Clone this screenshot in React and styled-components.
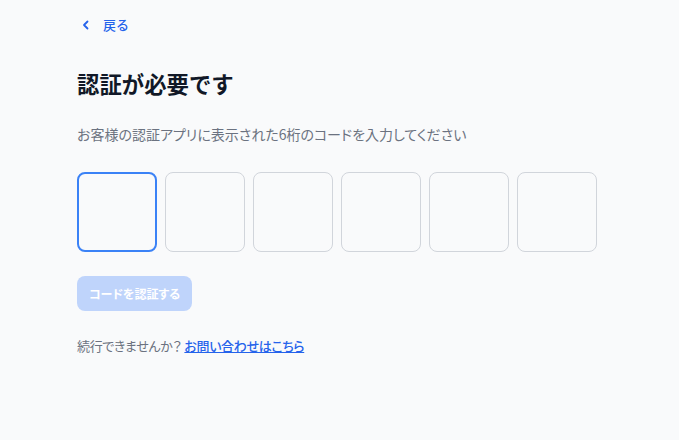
import React, { useState } from 'react';
import styled, { createGlobalStyle } from 'styled-components';

const GlobalStyle = createGlobalStyle`
  html, body {
    margin: 0;
    padding: 0;
    background: #f9fafb;
  }
  body {
    font-family: "Noto Sans CJK JP", "Noto Sans", sans-serif;
    color: #111827;
  }
`;

const Page = styled.div`
  min-height: 440px;
  padding: 11px 0 0 77px;
  box-sizing: border-box;
`;

const BackLink = styled.a`
  display: inline-flex;
  align-items: center;
  gap: 12px;
  margin-left: 4px;
  color: #2563eb;
  font-size: 13px;
  font-weight: 500;
  text-decoration: none;
  line-height: 22px;
  cursor: pointer;
`;

const Title = styled.h1`
  margin: 31px 0 0 0;
  font-size: 22.4px;
  font-weight: 700;
  line-height: 32px;
  color: #111827;
`;

const Subtitle = styled.p`
  margin: 25px 0 0 0;
  font-size: 14px;
  line-height: 20px;
  color: #6b7280;
  font-feature-settings: "palt";
`;

const CodeRow = styled.div`
  display: flex;
  gap: 8px;
  margin-top: 28px;
`;

const CodeBox = styled.input`
  width: 80px;
  height: 80px;
  box-sizing: border-box;
  border-radius: 8px;
  border: ${p => (p.$active ? '2px solid #3b82f6' : '1px solid #d1d5db')};
  background: #f9fafb;
  outline: none;
  text-align: center;
  font-size: 28px;
  font-family: inherit;
`;

const SubmitButton = styled.button`
  display: block;
  margin-top: 24px;
  height: 35px;
  padding: 0 12px;
  border: none;
  border-radius: 8px;
  background: #bfd4fb;
  color: #ffffff;
  font-family: inherit;
  font-size: 12px;
  font-weight: 700;
  font-feature-settings: "palt";
`;

const Help = styled.p`
  margin: 25px 0 0 0;
  font-size: 13px;
  line-height: 20px;
  color: #6b7280;
  font-feature-settings: "palt";
  letter-spacing: -0.35px;
`;

const HelpLink = styled.a`
  margin-left: 3px;
  color: #2563eb;
  font-weight: 500;
  text-decoration: underline;
  cursor: pointer;
`;

const Chevron = () => (
  <svg width="10" height="10" viewBox="0 0 10 10" fill="none">
    <path d="M6.5 1.5L3 5l3.5 3.5" stroke="#2563eb" strokeWidth="1.8" strokeLinecap="round" strokeLinejoin="round" />
  </svg>
);

const App = () => {
  const [digits, setDigits] = useState(['', '', '', '', '', '']);

  const handleChange = (i, value) => {
    const next = digits.slice();
    next[i] = value.slice(-1);
    setDigits(next);
  };

  return (
    <Page>
      <GlobalStyle />
      <BackLink>
        <Chevron />
        戻る
      </BackLink>
      <Title>認証が必要です</Title>
      <Subtitle>お客様の認証アプリに表示された6桁のコードを入力してください</Subtitle>
      <CodeRow>
        {digits.map((d, i) => (
          <CodeBox
            key={i}
            $active={i === 0}
            value={d}
            maxLength={1}
            onChange={e => handleChange(i, e.target.value)}
          />
        ))}
      </CodeRow>
      <SubmitButton disabled>コードを認証する</SubmitButton>
      <Help>
        続行できませんか？<HelpLink>お問い合わせはこちら</HelpLink>
      </Help>
    </Page>
  );
};

export default App;
